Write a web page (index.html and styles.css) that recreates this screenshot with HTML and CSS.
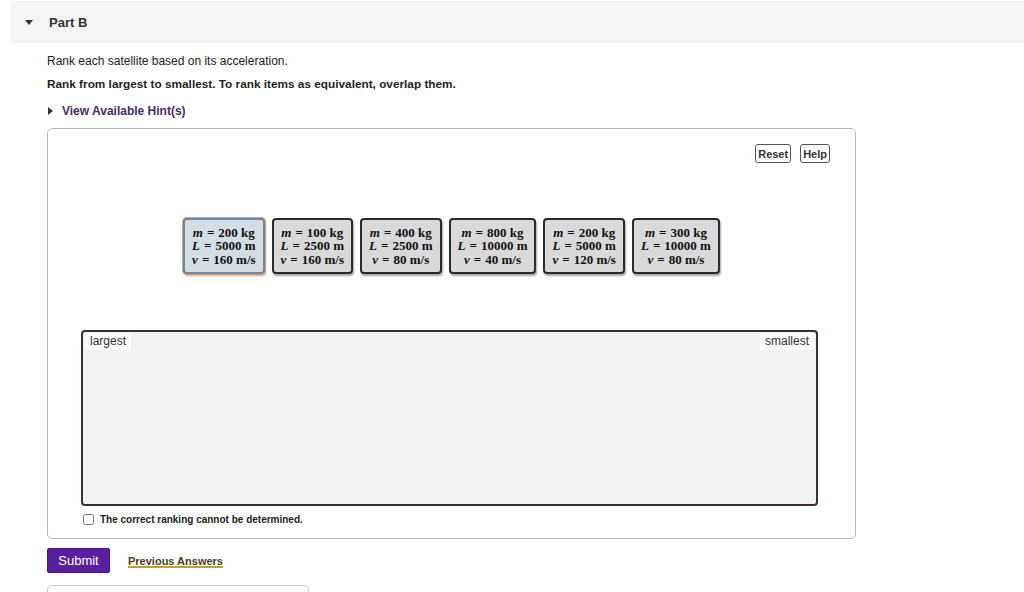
FILE: index.html
```html
<!DOCTYPE html>
<html lang="en">
<head>
  <meta charset="UTF-8">
  <title>Part B</title>
  <link rel="stylesheet" href="styles.css">
</head>
<body>

<div class="part-header">
  <span class="caret-down"></span>
  <span class="part-title">Part B</span>
</div>

<div class="part-body">
  <p class="prompt">Rank each satellite based on its acceleration.</p>
  <p class="instructions">Rank from largest to smallest. To rank items as equivalent, overlap them.</p>
  <div class="hints"><span class="caret-right"></span>View Available Hint(s)</div>

  <div class="panel">
    <div class="toolbar">
      <button class="tool-btn">Reset</button>
      <button class="tool-btn">Help</button>
    </div>

    <div class="cards">
      <div class="card selected">
        <div><i>m</i><span class="eq">=</span>200 kg</div>
        <div><i>L</i><span class="eq">=</span>5000 m</div>
        <div><i>v</i><span class="eq">=</span>160 m/s</div>
      </div>
      <div class="card">
        <div><i>m</i><span class="eq">=</span>100 kg</div>
        <div><i>L</i><span class="eq">=</span>2500 m</div>
        <div><i>v</i><span class="eq">=</span>160 m/s</div>
      </div>
      <div class="card">
        <div><i>m</i><span class="eq">=</span>400 kg</div>
        <div><i>L</i><span class="eq">=</span>2500 m</div>
        <div><i>v</i><span class="eq">=</span>80 m/s</div>
      </div>
      <div class="card">
        <div><i>m</i><span class="eq">=</span>800 kg</div>
        <div><i>L</i><span class="eq">=</span>10000 m</div>
        <div><i>v</i><span class="eq">=</span>40 m/s</div>
      </div>
      <div class="card">
        <div><i>m</i><span class="eq">=</span>200 kg</div>
        <div><i>L</i><span class="eq">=</span>5000 m</div>
        <div><i>v</i><span class="eq">=</span>120 m/s</div>
      </div>
      <div class="card">
        <div><i>m</i><span class="eq">=</span>300 kg</div>
        <div><i>L</i><span class="eq">=</span>10000 m</div>
        <div><i>v</i><span class="eq">=</span>80 m/s</div>
      </div>
    </div>

    <div class="rank-box">
      <span class="rank-label">largest</span>
      <span class="rank-label">smallest</span>
    </div>

    <label class="cannot">
      <input type="checkbox">
      The correct ranking cannot be determined.
    </label>
  </div>

  <div class="actions">
    <button class="submit">Submit</button>
    <a href="#" class="prev-link">Previous Answers</a>
  </div>

  <div class="next-box"></div>
</div>

</body>
</html>
```

FILE: styles.css
```css
body {
  margin: 0;
  font-family: Arial, "Liberation Sans", sans-serif;
  color: #222;
  background: #fff;
}
.part-header {
  margin: 1px 0 0 10px;
  height: 42px;
  background-color: #f5f5f5;
  display: flex;
  align-items: center;
}
.caret-down {
  width: 0;
  height: 0;
  margin-left: 15px;
  border-left: 4px solid transparent;
  border-right: 4px solid transparent;
  border-top: 5px solid #333;
}
.part-title {
  margin-left: 16px;
  font-size: 13px;
  font-weight: bold;
  color: #333;
}
.part-body {
  padding-left: 47px;
}
.prompt {
  margin: 11px 0 0;
  font-size: 12px;
  line-height: 14px;
}
.instructions {
  margin: 9px 0 0;
  font-size: 11.8px;
  font-weight: bold;
  line-height: 14px;
  color: #1e1e1e;
}
.hints {
  margin-top: 13px;
  display: flex;
  align-items: center;
  font-size: 12px;
  font-weight: bold;
  color: #4d2a66;
}
.caret-right {
  width: 0;
  height: 0;
  margin: 0 9px 0 1px;
  border-top: 4px solid transparent;
  border-bottom: 4px solid transparent;
  border-left: 5px solid #333;
}
.panel {
  margin-top: 10px;
  width: 807px;
  height: 409px;
  border: 1px solid #b8b8b8;
  border-radius: 5px;
}
.toolbar {
  display: flex;
  justify-content: flex-end;
  gap: 9px;
  padding: 15px 25px 0 0;
}
.tool-btn {
  font-family: Arial, "Liberation Sans", sans-serif;
  font-size: 11px;
  font-weight: bold;
  color: #333;
  background: #fff;
  border: 1px solid #555;
  border-radius: 3px;
  padding: 2px 2px;
  height: 19px;
}
.cards {
  display: flex;
  justify-content: center;
  gap: 7px;
  margin-top: 55px;
}
.card {
  height: 52px;
  padding: 0 7px;
  display: flex;
  flex-direction: column;
  justify-content: center;
  align-items: center;
  font-family: "Liberation Serif", "DejaVu Serif", serif;
  font-weight: bold;
  font-size: 13px;
  line-height: 13.5px;
  color: #111;
  background-color: #d9d9d9;
  border: 2px solid #2b2b2b;
  border-radius: 4px;
  box-shadow: 1px 2px 2px rgba(0, 0, 0, 0.35);
}
.card i {
  font-weight: bold;
}
.card .eq {
  margin: 0 4px;
}
.card.selected {
  background-color: #d5dde4;
  border-color: #6a8aa6;
  box-shadow: 0 0 0 1px #d8a070, 1px 2px 2px rgba(0, 0, 0, 0.3);
}
.rank-box {
  margin: 56px 0 0 33px;
  width: 729px;
  height: 170px;
  background-color: #f2f2f2;
  border: 2px solid #3a2e2e;
  border-radius: 4px;
  display: flex;
  justify-content: space-between;
  align-items: flex-start;
  padding: 1px 2px;
}
.rank-label {
  background: #fafafa;
  font-size: 12px;
  color: #333;
  padding: 1px 5px 2px 5px;
}
.cannot {
  display: flex;
  align-items: center;
  margin: 8px 0 0 34px;
  font-size: 10px;
  font-weight: bold;
  color: #222;
}
.cannot input {
  margin: 0 6px 0 1px;
  width: 11px;
  height: 11px;
}
.actions {
  display: flex;
  align-items: center;
  margin-top: 9px;
}
.submit {
  width: 63px;
  height: 25px;
  background-color: #5a1f9c;
  border: 1px solid #4a1785;
  border-radius: 2px;
  color: #fff;
  font-family: Arial, "Liberation Sans", sans-serif;
  font-size: 13px;
  padding: 0;
}
.prev-link {
  margin-left: 18px;
  font-size: 11px;
  font-weight: bold;
  color: #4a3c1c;
  text-decoration: underline;
  text-decoration-color: #c49a3a;
  text-decoration-thickness: 2px;
}
.next-box {
  margin-top: 12px;
  width: 260px;
  height: 20px;
  border: 1px solid #ccc;
  border-bottom: none;
  border-radius: 5px 5px 0 0;
}
```
